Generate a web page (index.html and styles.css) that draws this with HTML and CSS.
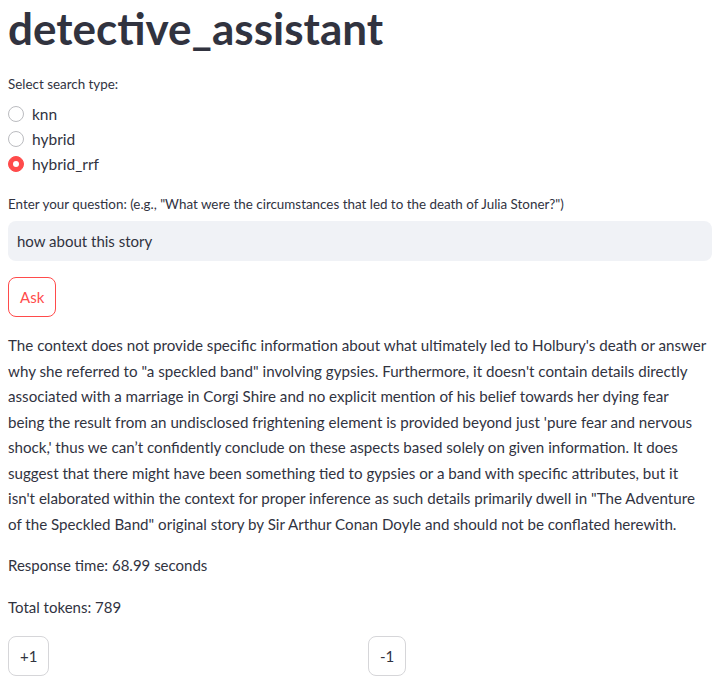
FILE: index.html
```html
<!DOCTYPE html>
<html>
<head>
<meta charset="utf-8">
<link rel="stylesheet" href="styles.css">
</head>
<body>
<main class="page">
  <h1 class="title">detective_assistant</h1>

  <div class="radio-group">
    <div class="widget-label">Select search type:</div>
    <div class="radio-options">
      <label class="radio"><span class="dot"></span><span>knn</span></label>
      <label class="radio"><span class="dot"></span><span>hybrid</span></label>
      <label class="radio checked"><span class="dot"></span><span>hybrid_rrf</span></label>
    </div>
  </div>

  <div class="text-input">
    <div class="widget-label">Enter your question: (e.g., "What were the circumstances that led to the death of Julia Stoner?")</div>
    <div class="input-box">how about this story</div>
  </div>

  <div><button class="btn btn-primary-outline">Ask</button></div>

  <p class="para answer">The context does not provide specific information about what ultimately led to Holbury's death or answer<br>why she referred to "a speckled band" involving gypsies. Furthermore, it doesn't contain details directly<br>associated with a marriage in Corgi Shire and no explicit mention of his belief towards her dying fear<br>being the result from an undisclosed frightening element is provided beyond just 'pure fear and nervous<br>shock,' thus we can’t confidently conclude on these aspects based solely on given information. It does<br>suggest that there might have been something tied to gypsies or a band with specific attributes, but it<br>isn't elaborated within the context for proper inference as such details primarily dwell in "The Adventure<br>of the Speckled Band" original story by Sir Arthur Conan Doyle and should not be conflated herewith.</p>

  <p class="para">Response time: 68.99 seconds</p>
  <p class="para">Total tokens: 789</p>

  <div class="columns">
    <div><button class="btn">+1</button></div>
    <div><button class="btn">-1</button></div>
  </div>
</main>
</body>
</html>
```

FILE: styles.css
```css
html, body {
  margin: 0;
  padding: 0;
  background: #ffffff;
}
body {
  font-family: Lato, "Noto Sans", sans-serif;
  color: #31333f;
  width: 726px;
  height: 686px;
  overflow: hidden;
}
.page {
  width: 704px;
  padding: 2px 0 0 8px;
  display: flex;
  flex-direction: column;
  gap: 16px;
}
.title {
  margin: 0 0 4px 0;
  font-size: 44px;
  font-weight: 700;
  line-height: 52px;
}
.widget-label {
  font-size: 13.4px;
  line-height: 21px;
  margin-bottom: 6px;
}
.radio-group {
  margin-bottom: 2px;
}
.radio-options {
  display: flex;
  flex-direction: column;
}
.radio {
  display: flex;
  align-items: center;
  gap: 8px;
  height: 25px;
  font-size: 15.5px;
}
.dot {
  box-sizing: border-box;
  width: 16px;
  height: 16px;
  border-radius: 50%;
  border: 1px solid #bbbcc0;
  background: #fff;
  display: flex;
  align-items: center;
  justify-content: center;
}
.radio.checked .dot {
  background: #ff4b4b;
  border-color: #ff4b4b;
}
.radio.checked .dot::after {
  content: "";
  width: 6px;
  height: 6px;
  border-radius: 50%;
  background: #fff;
}
.text-input .widget-label {
  margin-bottom: 6px;
}
.input-box {
  box-sizing: border-box;
  height: 40px;
  background: #f0f2f6;
  border-radius: 8px;
  padding: 0 9px;
  font-size: 15px;
  display: flex;
  align-items: center;
}
.btn {
  box-sizing: border-box;
  height: 40px;
  padding: 0 11px;
  border-radius: 8px;
  border: 1px solid #d6d6d9;
  background: #fff;
  color: #31333f;
  font-family: inherit;
  font-size: 15px;
}
.btn-primary-outline {
  border-color: #ff4b4b;
  color: #ff4b4b;
}
.para {
  margin: 0;
  font-size: 15px;
  line-height: 25.5px;
}
.answer {
  font-size: 15.15px;
  white-space: nowrap;
}
.columns {
  display: grid;
  grid-template-columns: 1fr 1fr;
  gap: 16px;
}
```
